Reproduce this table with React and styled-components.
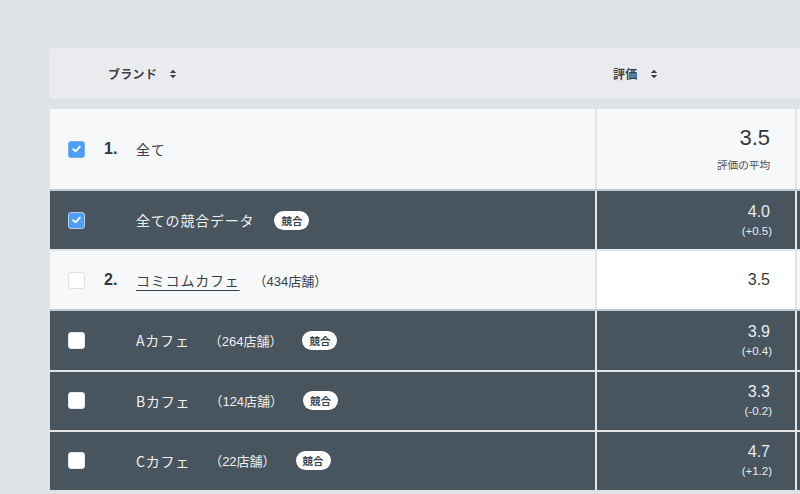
import React from 'react';
import styled, { createGlobalStyle } from 'styled-components';

const GlobalStyle = createGlobalStyle`
  html, body {
    margin: 0;
    padding: 0;
    background: #dfe2e6;
  }
  body {
    font-family: "Liberation Sans", "Noto Sans CJK JP", sans-serif;
    color: #3a4047;
  }
`;

const Page = styled.div`
  width: 800px;
  height: 494px;
  overflow: hidden;
  padding: 48px 0 0 49px;
  box-sizing: border-box;
`;

const HeaderBar = styled.div`
  display: grid;
  grid-template-columns: 548px 1fr;
  align-items: center;
  width: 780px;
  height: 51px;
  background: #e9ebee;
  border-radius: 4px;
`;

const HeadCell = styled.div`
  display: flex;
  align-items: center;
  padding-left: ${p => p.$pad}px;
  font-size: 12px;
  font-weight: 700;
  color: #3b4046;
  letter-spacing: 0.3px;
`;

const SortIcon = styled.svg`
  margin-left: 12px;
  width: 8px;
  height: 10px;
`;

const Body = styled.div`
  display: flex;
  flex-direction: column;
  margin: 10px 0 0 1px;
  width: 760px;
`;

const Row = styled.div`
  display: grid;
  grid-template-columns: 545px 198px 1fr;
  column-gap: 2px;
  height: ${p => p.$h}px;
  background: #e3e6e9;
  border-top: ${p => (p.$first ? 'none' : `2px solid ${p.$sep}`)};
`;

const NameCell = styled.div`
  display: flex;
  align-items: center;
  padding-left: 18px;
  background: ${p => (p.$dark ? '#48545e' : '#f7f8fa')};
  color: ${p => (p.$dark ? '#eef0f2' : '#3a4047')};
`;

const Check = styled.span`
  display: inline-flex;
  align-items: center;
  justify-content: center;
  width: 17px;
  height: 17px;
  box-sizing: border-box;
  border-radius: 3px;
  margin-right: 19px;
  background: ${p => (p.$on ? '#4b9df6' : '#ffffff')};
  border: 1px solid ${p => (p.$on ? (p.$dark ? '#b9cde2' : '#6fb0f7') : (p.$dark ? '#e8eaed' : '#dde0e4'))};
`;

const Rank = styled.span`
  width: 32px;
  font-size: 16px;
  font-weight: 700;
  color: #30363c;
`;

const Name = styled.span`
  font-size: 14px;
  letter-spacing: 0.8px;
  font-family: "Noto Sans CJK JP", sans-serif;
  text-decoration: ${p => (p.$link ? 'underline' : 'none')};
  text-underline-offset: 4px;
  text-decoration-thickness: 1px;
`;

const Count = styled.span`
  margin-left: ${p => (p.$tight ? 14 : 19)}px;
  font-size: 13px;
  font-family: "Liberation Sans", "Noto Sans CJK JP", sans-serif;
`;

const Badge = styled.span`
  display: inline-flex;
  align-items: center;
  justify-content: center;
  margin-left: 20px;
  height: 19px;
  padding: 0 7px;
  border-radius: 10px;
  background: #ffffff;
  color: #3d4650;
  font-size: 10.5px;
  font-weight: 700;
  font-family: "Noto Sans CJK JP", sans-serif;
`;

const RateCell = styled.div`
  display: flex;
  flex-direction: column;
  align-items: flex-end;
  justify-content: center;
  padding-right: 25px;
  background: ${p => (p.$dark ? '#48545e' : p.$white ? '#ffffff' : '#f7f8fa')};
  color: ${p => (p.$dark ? '#e9ecef' : '#33393f')};
`;

const Score = styled.span`
  font-size: ${p => (p.$big ? 22 : 16)}px;
  line-height: ${p => (p.$big ? 24 : 18)}px;
`;

const Sub = styled.span`
  margin-top: ${p => (p.$big ? 8 : 3)}px;
  margin-right: ${p => (p.$big ? 0 : -2)}px;
  font-size: ${p => (p.$big ? 10.6 : 11.5)}px;
  line-height: 14px;
  color: ${p => (p.$big ? '#4a5057' : 'inherit')};
  font-family: "Liberation Sans", "Noto Sans CJK JP", sans-serif;
`;

const Filler = styled.div`
  background: ${p => (p.$dark ? '#48545e' : '#f7f8fa')};
`;

const Sort = () => (
  <SortIcon viewBox="0 0 8 10">
    <path d="M4 0.8 L7.2 4 L0.8 4 Z" fill="#3b4046" />
    <path d="M4 9.2 L7.2 6 L0.8 6 Z" fill="#3b4046" />
  </SortIcon>
);

const Tick = () => (
  <svg width="9" height="8" viewBox="0 0 9 8">
    <path d="M1.2 4.2 L3.5 6.3 L7.8 1.6" fill="none" stroke="#ffffff" strokeWidth="1.9" strokeLinecap="round" strokeLinejoin="round" />
  </svg>
);

const rows = [
  { dark: true, on: true, name: '全ての競合データ', badge: true, score: '4.0', diff: '(+0.5)' },
  { dark: false, on: false, rank: '2.', name: 'コミコムカフェ', link: true, count: '（434店舗）', score: '3.5', white: true },
  { dark: true, on: false, name: 'Aカフェ', count: '（264店舗）', badge: true, score: '3.9', diff: '(+0.4)' },
  { dark: true, on: false, name: 'Bカフェ', count: '（124店舗）', badge: true, score: '3.3', diff: '(-0.2)' },
  { dark: true, on: false, name: 'Cカフェ', count: '（22店舗）', badge: true, score: '4.7', diff: '(+1.2)' },
];

export default function App() {
  return (
    <Page>
      <GlobalStyle />
      <HeaderBar>
        <HeadCell $pad={59}>ブランド<Sort /></HeadCell>
        <HeadCell $pad={16}>評価<Sort /></HeadCell>
      </HeaderBar>
      <Body>
        <Row $first $h={80}>
          <NameCell>
            <Check $on><Tick /></Check>
            <Rank>1.</Rank>
            <Name>全て</Name>
          </NameCell>
          <RateCell>
            <Score $big>3.5</Score>
            <Sub $big>評価の平均</Sub>
          </RateCell>
          <Filler />
        </Row>
        {rows.map((r, i) => {
          const prevLight = i === 0 || !rows[i - 1].dark;
          return (
            <Row key={r.name} $h={58.2} $sep={r.dark && prevLight ? '#c3c8cd' : '#e3e6e9'}>
              <NameCell $dark={r.dark}>
                <Check $on={r.on} $dark={r.dark}>{r.on && <Tick />}</Check>
                <Rank>{r.rank}</Rank>
                <Name $link={r.link}>{r.name}</Name>
                {r.count && <Count $tight={r.link}>{r.count}</Count>}
                {r.badge && <Badge>競合</Badge>}
              </NameCell>
              <RateCell $dark={r.dark} $white={r.white}>
                <Score>{r.score}</Score>
                {r.diff && <Sub>{r.diff}</Sub>}
              </RateCell>
              <Filler $dark={r.dark} />
            </Row>
          );
        })}
      </Body>
    </Page>
  );
}
